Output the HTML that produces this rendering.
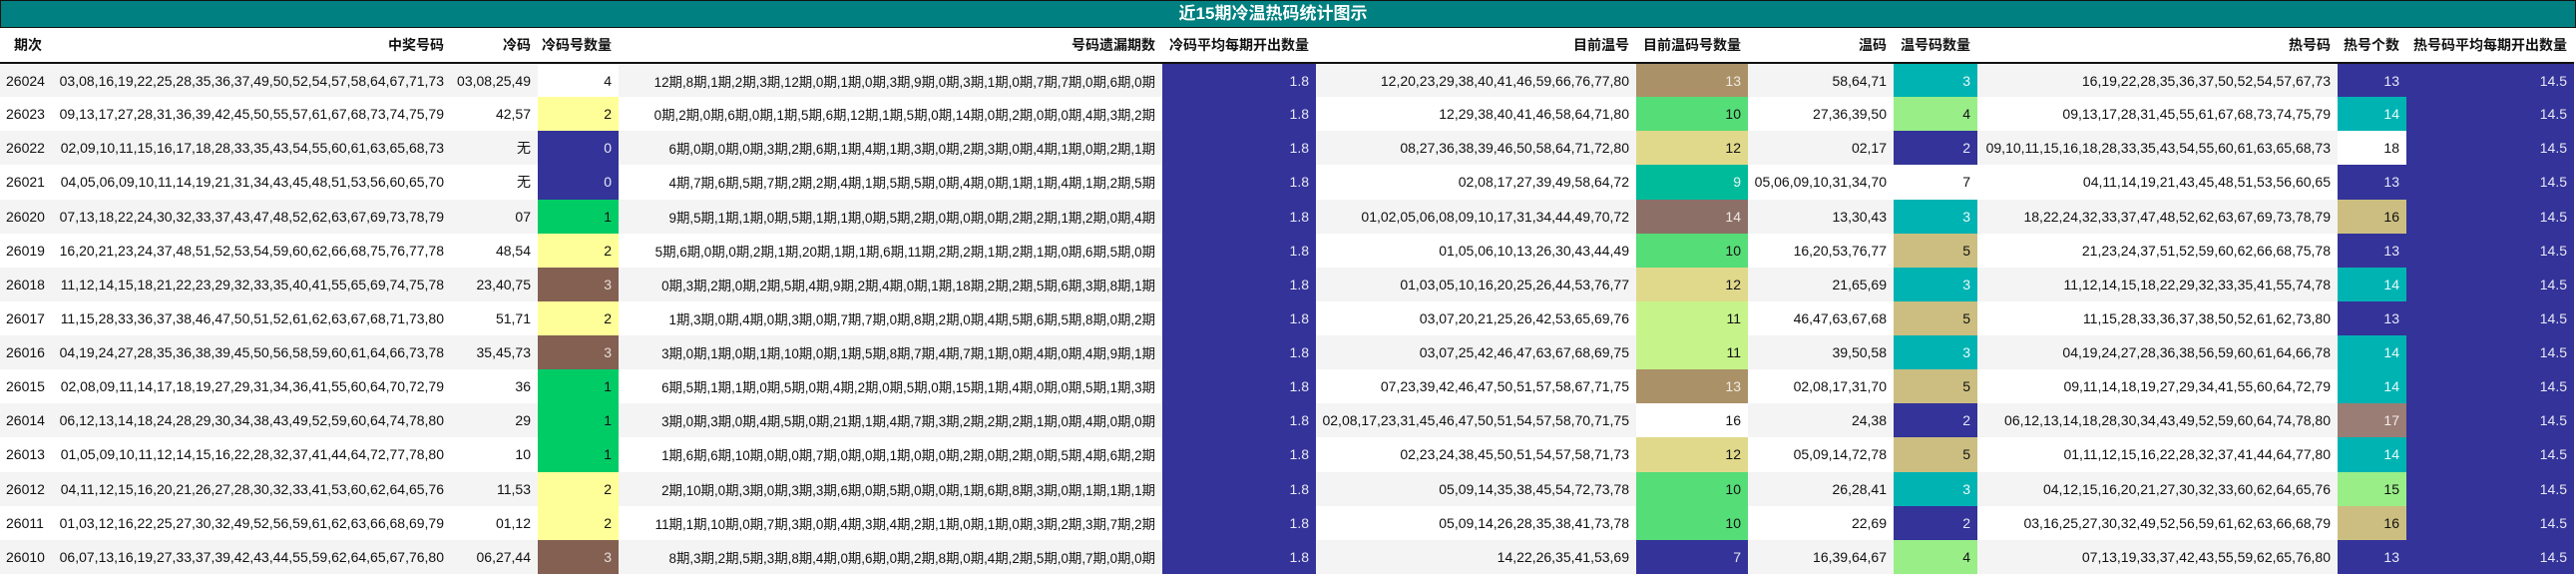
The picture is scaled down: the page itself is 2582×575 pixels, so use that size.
<!DOCTYPE html>
<html><head><meta charset="utf-8">
<style>
*{margin:0;padding:0;box-sizing:border-box}
body{width:2582px;height:575px;background:#fff;overflow:hidden;font-family:"Liberation Sans","Noto Sans CJK SC",sans-serif;color:#111}
.title{position:absolute;left:0;top:0;width:2582px;height:28px;background:#008080;border:1px solid #111;color:#fff;font-weight:bold;font-size:17px;line-height:26px;text-align:center;padding-right:30px}
table{position:absolute;left:0;top:28px;border-collapse:collapse;table-layout:fixed;width:2580px}
td,th{font-size:14px;text-align:right;padding:0 7px 0 0;white-space:nowrap;overflow:hidden;font-weight:normal}
th{font-weight:bold;height:35px;border-bottom:2px solid #111;background:#fff}
td{height:34.13px}
tr.g td{background:#f4f4f4}
tr.w td{background:#fff}
td.l,th.l{text-align:left;padding:0 0 0 6px}
td.m{font-size:13.4px}
tr td.nv{background:#333399;color:#e8e8f4}
tr td.ye{background:#ffff99}
tr td.br{background:#836052;color:#e8ddd8}
tr td.gr{background:#00cc66}
tr td.wh{background:#fff}
tr td.tn{background:#aa9168;color:#f0ebe0}
tr td.lg{background:#55dd77}
tr td.kh{background:#e0d98b}
tr td.te{background:#00bb99;color:#eafaf6}
tr td.gb{background:#8c7067;color:#f0e8e4}
tr td.pg{background:#c6f48a}
tr td.tl{background:#00b3b3;color:#eafafa}
tr td.l4{background:#99ee88}
tr td.k5{background:#ccbe80}
tr td.rb{background:#9a7d74;color:#f4ecea}
</style></head><body>
<div class="title">近15期冷温热码统计图示</div>
<table>
<colgroup><col style="width:55px"><col style="width:397px"><col style="width:87px"><col style="width:81px"><col style="width:545px"><col style="width:154px"><col style="width:321px"><col style="width:112px"><col style="width:146px"><col style="width:84px"><col style="width:361px"><col style="width:69px"><col style="width:168px"></colgroup>
<tr><th class="l" style="padding-left:14px">期次</th><th>中奖号码</th><th>冷码</th><th>冷码号数量</th><th>号码遗漏期数</th><th>冷码平均每期开出数量</th><th>目前温号</th><th>目前温码号数量</th><th>温码</th><th>温号码数量</th><th>热号码</th><th>热号个数</th><th>热号码平均每期开出数量</th></tr>
<tr class="g"><td class="l">26024</td><td>03,08,16,19,22,25,28,35,36,37,49,50,52,54,57,58,64,67,71,73</td><td>03,08,25,49</td><td class="wh">4</td><td class="m">12期,8期,1期,2期,3期,12期,0期,1期,0期,3期,9期,0期,3期,1期,0期,7期,7期,0期,6期,0期</td><td class="nv">1.8</td><td>12,20,23,29,38,40,41,46,59,66,76,77,80</td><td class="tn">13</td><td>58,64,71</td><td class="tl">3</td><td>16,19,22,28,35,36,37,50,52,54,57,67,73</td><td class="nv">13</td><td class="nv">14.5</td></tr>
<tr class="w"><td class="l">26023</td><td>09,13,17,27,28,31,36,39,42,45,50,55,57,61,67,68,73,74,75,79</td><td>42,57</td><td class="ye">2</td><td class="m">0期,2期,0期,6期,0期,1期,5期,6期,12期,1期,5期,0期,14期,0期,2期,0期,0期,4期,3期,2期</td><td class="nv">1.8</td><td>12,29,38,40,41,46,58,64,71,80</td><td class="lg">10</td><td>27,36,39,50</td><td class="l4">4</td><td>09,13,17,28,31,45,55,61,67,68,73,74,75,79</td><td class="tl">14</td><td class="nv">14.5</td></tr>
<tr class="g"><td class="l">26022</td><td>02,09,10,11,15,16,17,18,28,33,35,43,54,55,60,61,63,65,68,73</td><td>无</td><td class="nv">0</td><td class="m">6期,0期,0期,0期,3期,2期,6期,1期,4期,1期,3期,0期,2期,3期,0期,4期,1期,0期,2期,1期</td><td class="nv">1.8</td><td>08,27,36,38,39,46,50,58,64,71,72,80</td><td class="kh">12</td><td>02,17</td><td class="nv">2</td><td>09,10,11,15,16,18,28,33,35,43,54,55,60,61,63,65,68,73</td><td class="wh">18</td><td class="nv">14.5</td></tr>
<tr class="w"><td class="l">26021</td><td>04,05,06,09,10,11,14,19,21,31,34,43,45,48,51,53,56,60,65,70</td><td>无</td><td class="nv">0</td><td class="m">4期,7期,6期,5期,7期,2期,2期,4期,1期,5期,5期,0期,4期,0期,1期,1期,4期,1期,2期,5期</td><td class="nv">1.8</td><td>02,08,17,27,39,49,58,64,72</td><td class="te">9</td><td>05,06,09,10,31,34,70</td><td class="wh">7</td><td>04,11,14,19,21,43,45,48,51,53,56,60,65</td><td class="nv">13</td><td class="nv">14.5</td></tr>
<tr class="g"><td class="l">26020</td><td>07,13,18,22,24,30,32,33,37,43,47,48,52,62,63,67,69,73,78,79</td><td>07</td><td class="gr">1</td><td class="m">9期,5期,1期,1期,0期,5期,1期,1期,0期,5期,2期,0期,0期,0期,2期,2期,1期,2期,0期,4期</td><td class="nv">1.8</td><td>01,02,05,06,08,09,10,17,31,34,44,49,70,72</td><td class="gb">14</td><td>13,30,43</td><td class="tl">3</td><td>18,22,24,32,33,37,47,48,52,62,63,67,69,73,78,79</td><td class="k5">16</td><td class="nv">14.5</td></tr>
<tr class="w"><td class="l">26019</td><td>16,20,21,23,24,37,48,51,52,53,54,59,60,62,66,68,75,76,77,78</td><td>48,54</td><td class="ye">2</td><td class="m">5期,6期,0期,0期,2期,1期,20期,1期,1期,6期,11期,2期,2期,1期,2期,1期,0期,6期,5期,0期</td><td class="nv">1.8</td><td>01,05,06,10,13,26,30,43,44,49</td><td class="lg">10</td><td>16,20,53,76,77</td><td class="k5">5</td><td>21,23,24,37,51,52,59,60,62,66,68,75,78</td><td class="nv">13</td><td class="nv">14.5</td></tr>
<tr class="g"><td class="l">26018</td><td>11,12,14,15,18,21,22,23,29,32,33,35,40,41,55,65,69,74,75,78</td><td>23,40,75</td><td class="br">3</td><td class="m">0期,3期,2期,0期,2期,5期,4期,9期,2期,4期,0期,1期,18期,2期,2期,5期,6期,3期,8期,1期</td><td class="nv">1.8</td><td>01,03,05,10,16,20,25,26,44,53,76,77</td><td class="kh">12</td><td>21,65,69</td><td class="tl">3</td><td>11,12,14,15,18,22,29,32,33,35,41,55,74,78</td><td class="tl">14</td><td class="nv">14.5</td></tr>
<tr class="w"><td class="l">26017</td><td>11,15,28,33,36,37,38,46,47,50,51,52,61,62,63,67,68,71,73,80</td><td>51,71</td><td class="ye">2</td><td class="m">1期,3期,0期,4期,0期,3期,0期,7期,7期,0期,8期,2期,0期,4期,5期,6期,5期,8期,0期,2期</td><td class="nv">1.8</td><td>03,07,20,21,25,26,42,53,65,69,76</td><td class="pg">11</td><td>46,47,63,67,68</td><td class="k5">5</td><td>11,15,28,33,36,37,38,50,52,61,62,73,80</td><td class="nv">13</td><td class="nv">14.5</td></tr>
<tr class="g"><td class="l">26016</td><td>04,19,24,27,28,35,36,38,39,45,50,56,58,59,60,61,64,66,73,78</td><td>35,45,73</td><td class="br">3</td><td class="m">3期,0期,1期,0期,1期,10期,0期,1期,5期,8期,7期,4期,7期,1期,0期,4期,0期,4期,9期,1期</td><td class="nv">1.8</td><td>03,07,25,42,46,47,63,67,68,69,75</td><td class="pg">11</td><td>39,50,58</td><td class="tl">3</td><td>04,19,24,27,28,36,38,56,59,60,61,64,66,78</td><td class="tl">14</td><td class="nv">14.5</td></tr>
<tr class="w"><td class="l">26015</td><td>02,08,09,11,14,17,18,19,27,29,31,34,36,41,55,60,64,70,72,79</td><td>36</td><td class="gr">1</td><td class="m">6期,5期,1期,1期,0期,5期,0期,4期,2期,0期,5期,0期,15期,1期,4期,0期,0期,5期,1期,3期</td><td class="nv">1.8</td><td>07,23,39,42,46,47,50,51,57,58,67,71,75</td><td class="tn">13</td><td>02,08,17,31,70</td><td class="k5">5</td><td>09,11,14,18,19,27,29,34,41,55,60,64,72,79</td><td class="tl">14</td><td class="nv">14.5</td></tr>
<tr class="g"><td class="l">26014</td><td>06,12,13,14,18,24,28,29,30,34,38,43,49,52,59,60,64,74,78,80</td><td>29</td><td class="gr">1</td><td class="m">3期,0期,3期,0期,4期,5期,0期,21期,1期,4期,7期,3期,2期,2期,2期,1期,0期,4期,0期,0期</td><td class="nv">1.8</td><td>02,08,17,23,31,45,46,47,50,51,54,57,58,70,71,75</td><td class="wh">16</td><td>24,38</td><td class="nv">2</td><td>06,12,13,14,18,28,30,34,43,49,52,59,60,64,74,78,80</td><td class="rb">17</td><td class="nv">14.5</td></tr>
<tr class="w"><td class="l">26013</td><td>01,05,09,10,11,12,14,15,16,22,28,32,37,41,44,64,72,77,78,80</td><td>10</td><td class="gr">1</td><td class="m">1期,6期,6期,10期,0期,0期,7期,0期,0期,1期,0期,0期,2期,0期,2期,0期,5期,4期,6期,2期</td><td class="nv">1.8</td><td>02,23,24,38,45,50,51,54,57,58,71,73</td><td class="kh">12</td><td>05,09,14,72,78</td><td class="k5">5</td><td>01,11,12,15,16,22,28,32,37,41,44,64,77,80</td><td class="tl">14</td><td class="nv">14.5</td></tr>
<tr class="g"><td class="l">26012</td><td>04,11,12,15,16,20,21,26,27,28,30,32,33,41,53,60,62,64,65,76</td><td>11,53</td><td class="ye">2</td><td class="m">2期,10期,0期,3期,0期,3期,3期,6期,0期,5期,0期,0期,1期,6期,8期,3期,0期,1期,1期,1期</td><td class="nv">1.8</td><td>05,09,14,35,38,45,54,72,73,78</td><td class="lg">10</td><td>26,28,41</td><td class="tl">3</td><td>04,12,15,16,20,21,27,30,32,33,60,62,64,65,76</td><td class="l4">15</td><td class="nv">14.5</td></tr>
<tr class="w"><td class="l">26011</td><td>01,03,12,16,22,25,27,30,32,49,52,56,59,61,62,63,66,68,69,79</td><td>01,12</td><td class="ye">2</td><td class="m">11期,1期,10期,0期,7期,3期,0期,4期,3期,4期,2期,1期,0期,1期,0期,3期,2期,3期,7期,2期</td><td class="nv">1.8</td><td>05,09,14,26,28,35,38,41,73,78</td><td class="lg">10</td><td>22,69</td><td class="nv">2</td><td>03,16,25,27,30,32,49,52,56,59,61,62,63,66,68,79</td><td class="k5">16</td><td class="nv">14.5</td></tr>
<tr class="g"><td class="l">26010</td><td>06,07,13,16,19,27,33,37,39,42,43,44,55,59,62,64,65,67,76,80</td><td>06,27,44</td><td class="br">3</td><td class="m">8期,3期,2期,5期,3期,8期,4期,0期,6期,0期,2期,8期,0期,4期,2期,5期,0期,7期,0期,0期</td><td class="nv">1.8</td><td>14,22,26,35,41,53,69</td><td class="nv">7</td><td>16,39,64,67</td><td class="l4">4</td><td>07,13,19,33,37,42,43,55,59,62,65,76,80</td><td class="nv">13</td><td class="nv">14.5</td></tr>
</table>
</body></html>
